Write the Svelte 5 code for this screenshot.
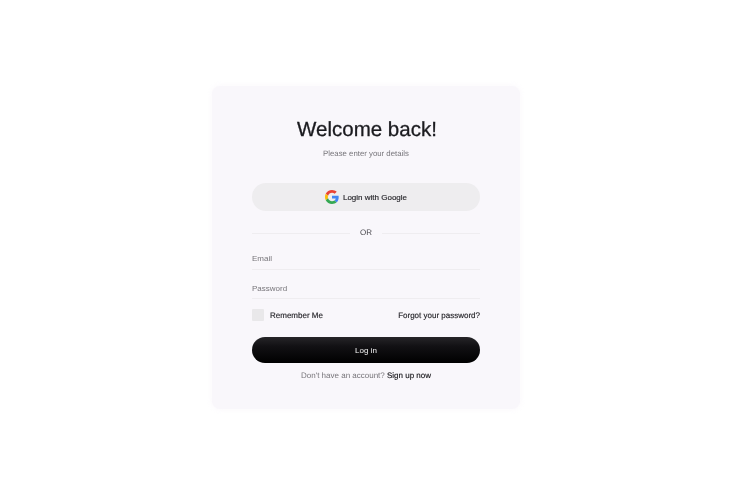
<script>
  let email = $state("");
  let password = $state("");
  let remember = $state(false);
</script>

<main class="page">
  <form class="card" onsubmit={(e) => e.preventDefault()}>
    <h1>Welcome back!</h1>
    <p class="sub">Please enter your details</p>

    <button type="button" class="google">
      <svg width="14" height="14" viewBox="0 0 48 48" aria-hidden="true">
        <path fill="#EA4335" d="M24 9.5c3.5 0 6.700 1.200 9.200 3.600l6.900-6.900C35.900 2.400 30.500 0 24 0 14.600 0 6.500 5.400 2.600 13.200l8 6.200C12.500 13.600 17.800 9.500 24 9.500z"/>
        <path fill="#4285F4" d="M46.900 24.500c0-1.600-.2-3.100-.4-4.500H24v9h12.900c-.6 3-2.300 5.500-4.800 7.200l7.700 6c4.500-4.200 7.100-10.300 7.100-17.700z"/>
        <path fill="#FBBC05" d="M10.500 28.600c-.5-1.400-.8-3-.8-4.600s.3-3.200.8-4.600l-8-6.200C.9 16.500 0 20.100 0 24s.9 7.500 2.600 10.800l7.900-6.200z"/>
        <path fill="#34A853" d="M24 48c6.500 0 11.900-2.100 15.900-5.800l-7.700-6c-2.200 1.400-4.900 2.300-8.200 2.300-6.200 0-11.500-4.200-13.400-9.800l-8 6.200C6.500 42.600 14.600 48 24 48z"/>
      </svg>
      <span>Login with Google</span>
    </button>

    <div class="divider"><span>OR</span></div>

    <input class="field first" type="email" placeholder="Email" bind:value={email} />
    <input class="field pass" type="password" placeholder="Password" bind:value={password} />

    <div class="options">
      <label class="remember">
        <input type="checkbox" bind:checked={remember} />
        <span>Remember Me</span>
      </label>
      <a href="#forgot">Forgot your password?</a>
    </div>

    <button type="submit" class="login">Log in</button>

    <p class="signup">Don't have an account? <a href="#signup">Sign up now</a></p>
  </form>
</main>

<style>
  :global(body) {
    margin: 0;
    background: #fff;
    font-family: "Liberation Sans", Arial, sans-serif;
    text-rendering: geometricPrecision;
  }

  .page {
    width: 732px;
    height: 496px;
    display: flex;
    justify-content: center;
    padding-top: 86px;
    box-sizing: border-box;
    will-change: transform;
  }

  .card {
    width: 308px;
    height: 323px;
    box-sizing: border-box;
    padding: 32px 40px 0;
    background: #f9f7fb;
    border-radius: 8px;
    box-shadow: 0 0 5px 1px rgba(249, 247, 251, 0.7);
    display: flex;
    flex-direction: column;
  }

  h1 {
    margin: 0;
    padding-left: 2px;
    font-size: 20.500px;
    line-height: 24px;
    font-weight: 400;
    color: #1b1b1f;
    text-align: center;
    -webkit-text-stroke: 0.3px #1b1b1f;
  }

  .sub {
    margin: 6px 0 0;
    font-size: 7.800px;
    line-height: 12px;
    color: #77757a;
    text-align: center;
  }

  .google {
    margin-top: 23px;
    height: 28px;
    border: none;
    border-radius: 14px;
    background: #eeedef;
    display: flex;
    align-items: center;
    justify-content: center;
    gap: 4px;
    font: inherit;
    font-size: 8px;
    color: #26252a;
    padding: 0;
    -webkit-text-stroke: 0.15px #26252a;
  }

  .divider {
    margin-top: 16px;
    display: flex;
    align-items: center;
    gap: 10px;
    font-size: 8px;
    line-height: 12px;
    color: #48474c;
  }

  .divider::before,
  .divider::after {
    content: "";
    flex: 1;
    height: 1px;
    background: #efedf0;
  }

  .field {
    display: block;
    width: 100%;
    box-sizing: border-box;
    height: 23px;
    margin-top: 6px;
    padding: 0;
    border: none;
    border-bottom: 1px solid #efedf0;
    background: transparent;
    outline: none;
    font: inherit;
    font-size: 8px;
    color: #26252a;
  }

  .field.first {
    margin-top: 8px;
  }

  .field.pass {
    padding-top: 3px;
  }

  .field::placeholder {
    color: #77757a;
    opacity: 1;
  }

  .options {
    margin-top: 10px;
    display: flex;
    align-items: center;
    justify-content: space-between;
    font-size: 8px;
    color: #1f1e23;
    -webkit-text-stroke: 0.15px #1f1e23;
  }

  .remember {
    display: flex;
    align-items: center;
    gap: 6px;
  }

  .remember input {
    appearance: none;
    width: 12px;
    height: 12px;
    margin: 0;
    border-radius: 1px;
    background: #e9e8ea;
  }

  .options a {
    color: inherit;
    text-decoration: none;
  }

  .login {
    margin-top: 16px;
    height: 26px;
    border: none;
    border-radius: 13px;
    background: linear-gradient(#262528, #121114 35%, #000);
    color: #f4f4f4;
    font: inherit;
    font-size: 8px;
    padding: 0;
  }

  .signup {
    margin: 7px 0 0;
    font-size: 8px;
    line-height: 12px;
    color: #77757a;
    text-align: center;
  }

  .signup a {
    color: #17161a;
    text-decoration: none;
    -webkit-text-stroke: 0.15px #17161a;
  }
</style>
